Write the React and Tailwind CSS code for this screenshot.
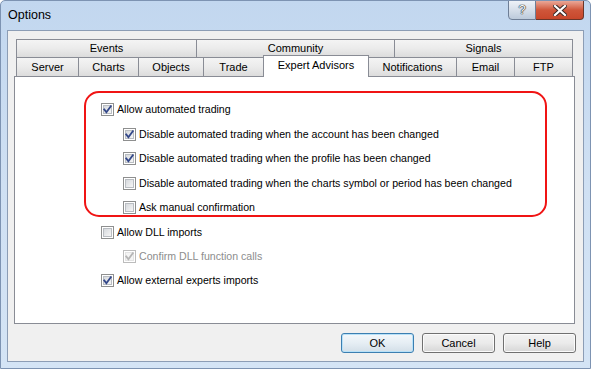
import React from "react";

function Check({ checked, disabled }) {
  return (
    <div
      className={
        disabled
          ? "relative w-[13px] h-[13px] shrink-0 border border-[#bcbcbc] bg-white p-[1px]"
          : "relative w-[13px] h-[13px] shrink-0 border border-[#8e8f8f] bg-white p-[1px]"
      }
    >
      <div
        className={
          disabled
            ? "w-full h-full border border-[#e3e3e3] bg-[#f4f4f4]"
            : "w-full h-full border border-[#b9bdc2] bg-gradient-to-br from-[#d6d9dd] to-[#f6f6f6]"
        }
      />
      {checked && (
        <svg className="absolute left-[-1px] top-[-1px] w-[13px] h-[13px]" viewBox="0 0 13 13">
          <path
            d="M3.2 6.4 L5.4 9.3 L9.8 3.2"
            fill="none"
            stroke={disabled ? "#b5b5b5" : "#34488a"}
            strokeWidth="1.8"
            strokeLinecap="square"
          />
        </svg>
      )}
    </div>
  );
}

function Row({ checked, disabled, label, className = "" }) {
  return (
    <div className={"flex items-center h-[13px] gap-[3px] " + className}>
      <Check checked={checked} disabled={disabled} />
      <span
        className={
          disabled
            ? "text-[10.6px] leading-[13px] text-[#8d8d8d] whitespace-nowrap"
            : "text-[10.6px] leading-[13px] text-black whitespace-nowrap"
        }
      >
        {label}
      </span>
    </div>
  );
}

const tabBase =
  "flex items-center justify-center border-l border-t border-[#898c95] bg-gradient-to-b from-[#f4f4f4] via-[#ebebeb] to-[#dcdcdc] text-[11px] leading-[13px] text-black whitespace-nowrap";

function Button({ label, primary }) {
  return (
    <div
      className={
        primary
          ? "w-[73px] h-[20px] rounded-[3px] border border-[#3c7fb1] bg-gradient-to-b from-[#f4f8fb] via-[#e6eef4] to-[#d3dfe8] shadow-[inset_0_0_0_1px_#b8e1f8] flex items-center justify-center text-[11px] text-black"
          : "w-[73px] h-[20px] rounded-[3px] border border-[#707070] bg-gradient-to-b from-[#f2f2f2] via-[#ebebeb] to-[#d6d6d6] shadow-[inset_0_0_0_1px_#fbfbfb] flex items-center justify-center text-[11px] text-black"
      }
    >
      {label}
    </div>
  );
}

export default function App() {
  return (
    <div className="w-[591px] h-[369px] font-['Liberation_Sans',Arial,sans-serif] flex flex-col border border-[#7d93b2] rounded-t-[5px] bg-gradient-to-b from-[#c2d7ef] via-[#cfe0f3] to-[#d4e4f5] overflow-hidden">
      {/* Title bar */}
      <div className="h-[29px] flex justify-between shrink-0">
        <div className="pl-[7px] pt-[6px] text-[12.5px] leading-[16px] text-black">Options</div>
        <div className="flex mr-[6px] mt-[-1px] h-[20px]">
          <div className="w-[28px] h-[20px] rounded-bl-[4px] border border-[#6e7e96] bg-gradient-to-b from-[#eef2f8] via-[#d6dfea] to-[#bccadb] flex items-center justify-center text-[13px] text-white [text-shadow:0_0_1px_#222,0_0_1px_#222,0_0_1px_#222]">
            ?
          </div>
          <div className="w-[48px] h-[20px] rounded-br-[4px] border border-l-0 border-[#6b3528] bg-gradient-to-b from-[#e9a797] via-[#cf563a] to-[#c8472b] flex items-center justify-center">
            <svg width="14" height="11" viewBox="0 0 14 11">
              <path d="M2 1 L12 10 M12 1 L2 10" stroke="#3a2a28" strokeWidth="4.2" strokeLinecap="square" />
              <path d="M2 1 L12 10 M12 1 L2 10" stroke="#ffffff" strokeWidth="2.2" strokeLinecap="square" />
            </svg>
          </div>
        </div>
      </div>

      {/* Client area */}
      <div className="flex-1 mx-[6px] mb-[6px] border border-[#8c9db5] bg-[#f0f0f0] flex flex-col">
        <div className="pt-[8px] pl-[6px] pr-[8px]">
          {/* Tabs header */}
          <div className="ml-[2px] w-[557px] h-[37px] flex flex-col">
            <div className="flex h-[18px]">
              <div className={tabBase + " w-[180px]"}>Events</div>
              <div className={tabBase + " w-[198px]"}>Community</div>
              <div className={tabBase + " w-[179px] border-r"}>Signals</div>
            </div>
            <div className="flex h-[19px] items-end">
              <div className={tabBase + " w-[62px] h-[19px]"}>Server</div>
              <div className={tabBase + " w-[60px] h-[19px]"}>Charts</div>
              <div className={tabBase + " w-[65px] h-[19px]"}>Objects</div>
              <div className={tabBase + " w-[60px] h-[19px]"}>Trade</div>
              <div className="relative z-10 w-[106px] mr-[-1px] h-[22px] mb-[-1px] border border-b-0 border-[#898c95] bg-white flex items-start justify-center pt-[3px] text-[11px] leading-[13px] text-black whitespace-nowrap">
                Expert Advisors
              </div>
              <div className={tabBase + " w-[88px] h-[19px]"}>Notifications</div>
              <div className={tabBase + " w-[58px] h-[19px]"}>Email</div>
              <div className={tabBase + " w-[59px] h-[19px] border-r"}>FTP</div>
            </div>
          </div>

          {/* Panel */}
          <div className="w-[561px] h-[248px] border border-[#898c95] bg-white flex flex-col">
            <div className="ml-[69px] mt-[14px] w-[463px] border-2 border-[#f01414] rounded-[15px] pl-[15px] pt-[10px] pb-[1px] flex flex-col">
              <Row checked label="Allow automated trading" />
              <Row
                checked
                className="ml-[22px] mt-[12px]"
                label="Disable automated trading when the account has been changed"
              />
              <Row
                checked
                className="ml-[22px] mt-[11px]"
                label="Disable automated trading when the profile has been changed"
              />
              <Row
                className="ml-[22px] mt-[12px]"
                label="Disable automated trading when the charts symbol or period has been changed"
              />
              <Row className="ml-[22px] mt-[11px]" label="Ask manual confirmation" />
            </div>
            <div className="ml-[86px] mt-[9px] flex flex-col">
              <Row label="Allow DLL imports" />
              <Row checked disabled className="ml-[22px] mt-[11px]" label="Confirm DLL function calls" />
              <Row checked className="mt-[11px]" label="Allow external experts imports" />
            </div>
          </div>
        </div>

        {/* Buttons */}
        <div className="mt-[9px] flex justify-end gap-[8px] pr-[7px]">
          <Button primary label="OK" />
          <Button label="Cancel" />
          <Button label="Help" />
        </div>
      </div>
    </div>
  );
}
